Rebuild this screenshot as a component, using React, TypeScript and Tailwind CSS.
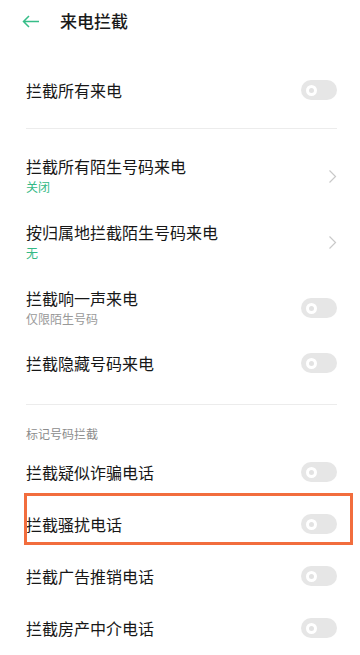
import React from 'react';

const font = { fontFamily: '"Noto Sans CJK SC", "Noto Sans", sans-serif' };

const Toggle = () => (
  <div className="w-[36px] h-[20px] rounded-full bg-[#e6e6e6] flex items-center pl-[5px] shrink-0">
    <div className="w-[11px] h-[11px] rounded-full border-[3px] border-white bg-[#e2e2e2]" />
  </div>
);

const Chevron = () => (
  <svg width="9" height="15" viewBox="0 0 9 15" className="shrink-0">
    <path d="M1.5 1.5L7.5 7.5L1.5 13.5" fill="none" stroke="#c9c9c9" strokeWidth="1.2" />
  </svg>
);

const SwitchRow = ({ title, h = 'h-[52px]', children }: { title: string; h?: string; children?: React.ReactNode }) => (
  <div className={`relative flex items-center justify-between ${h}`}>
    <span className="text-[16px] leading-[22px] text-[#171717]">{title}</span>
    <Toggle />
    {children}
  </div>
);

const App = () => {
  return (
    <div className="w-[360px] h-[655px] bg-white overflow-hidden pl-[26px] pr-[23px]" style={font}>
      {/* Header */}
      <div className="h-[42px] flex items-center -ml-[4px]">
        <svg width="18" height="13" viewBox="0 0 18 13" className="mt-[1px]">
          <path d="M17 6.5H1.5M7 1L1.5 6.5L7 12" fill="none" stroke="#36bd88" strokeWidth="1.5" />
        </svg>
        <span className="ml-[20px] text-[17px] font-medium text-[#1a1a1a]">来电拦截</span>
      </div>

      <div className="pt-[22px] pb-[12px]">
        <SwitchRow title="拦截所有来电" />
      </div>
      <div className="h-px bg-[#ececec]" />

      <div className="pt-[14px]">
        <div className="flex items-center justify-between h-[66px]">
          <div className="flex flex-col">
            <span className="text-[16px] leading-[22px] text-[#171717]">拦截所有陌生号码来电</span>
            <span className="text-[12px] leading-[20px] text-[#34b985]">关闭</span>
          </div>
          <Chevron />
        </div>
        <div className="flex items-center justify-between h-[66px]">
          <div className="flex flex-col">
            <span className="text-[16px] leading-[22px] text-[#171717]">按归属地拦截陌生号码来电</span>
            <span className="text-[12px] leading-[20px] text-[#34b985]">无</span>
          </div>
          <Chevron />
        </div>
        <div className="flex items-center justify-between h-[66px]">
          <div className="flex flex-col">
            <span className="text-[16px] leading-[22px] text-[#171717]">拦截响一声来电</span>
            <span className="text-[12px] leading-[20px] text-[#999999]">仅限陌生号码</span>
          </div>
          <Toggle />
        </div>
        <SwitchRow title="拦截隐藏号码来电" h="h-[44px]" />
      </div>

      <div className="mt-[19px] h-px bg-[#ececec]" />

      <div className="pt-[20px] pb-[4px] text-[12px] leading-[17px] text-[#8c8c8c]">标记号码拦截</div>

      <SwitchRow title="拦截疑似诈骗电话" />
      <SwitchRow title="拦截骚扰电话">
        <div className="absolute left-[-2px] top-[-5px] w-[329px] h-[52px] border-[3.5px] border-[#f26d3d] pointer-events-none" />
      </SwitchRow>
      <SwitchRow title="拦截广告推销电话" />
      <SwitchRow title="拦截房产中介电话" />
    </div>
  );
};

export default App;
